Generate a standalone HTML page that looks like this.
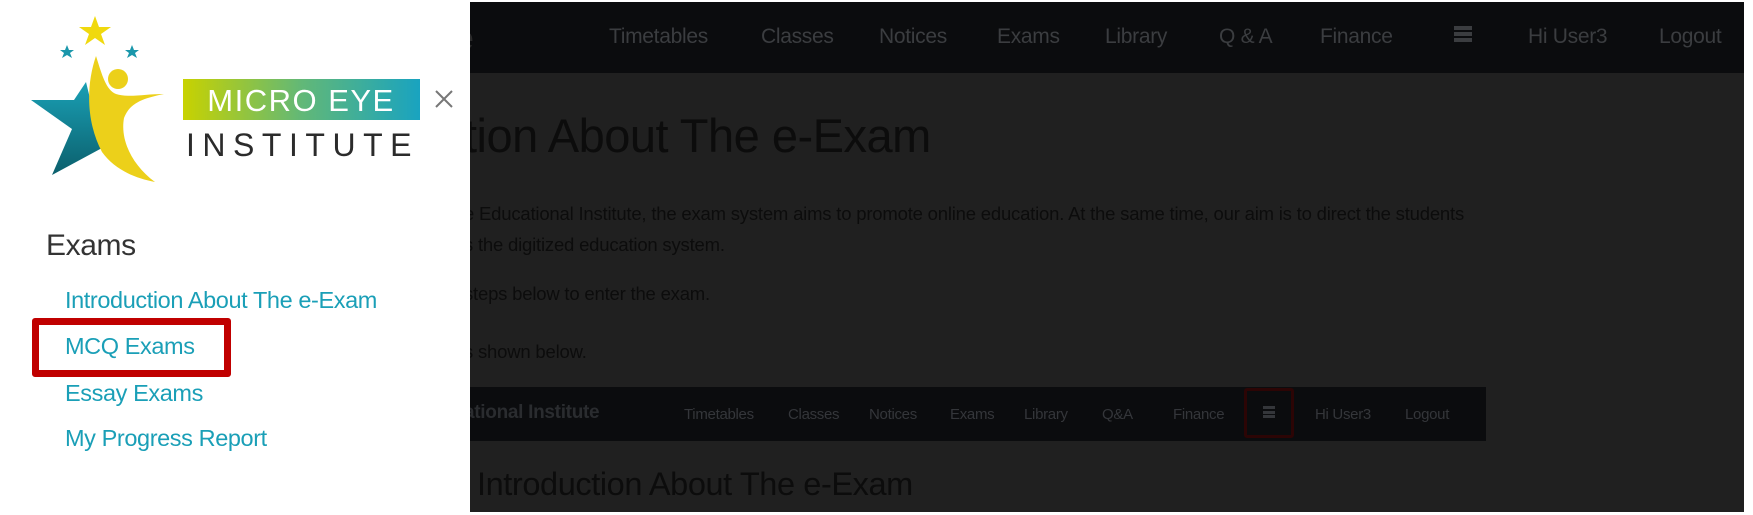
<!DOCTYPE html>
<html><head><meta charset="utf-8"><style>
*{margin:0;padding:0;box-sizing:border-box}
html,body{width:1753px;height:515px;overflow:hidden;background:#fff;font-family:"Liberation Sans",sans-serif}
.dark{position:absolute;left:470px;top:2px;width:1274px;height:510px;background:#202020;overflow:hidden}
.t{position:absolute;white-space:nowrap;line-height:1}
.nav{position:absolute;left:0;top:0;width:100%;height:71px;background:#0b0c0e}
.nav .t{top:24px;font-size:21px;color:#3b3d40;letter-spacing:-0.3px}
.inner{position:absolute;left:0;top:385px;width:1016px;height:54px;background:#0b0c0e}
.inner .t{top:20px;font-size:15px;color:#34363a;letter-spacing:-0.3px}
.p{font-size:18.5px;color:#0c0c0c;letter-spacing:-0.2px}
.panel{position:absolute;left:0;top:0;width:470px;height:515px;background:#fff}
.link{position:absolute;left:65px;font-size:23.5px;color:#1a9fb7;white-space:nowrap;line-height:1;letter-spacing:-0.4px}
</style></head><body>
<div class="dark">
 <div class="nav">
  <div class="t" style="left:-14px;font-size:32px;color:#2a2a2a;top:20px">e</div>
  <div class="t" style="left:139px">Timetables</div>
  <div class="t" style="left:291px">Classes</div>
  <div class="t" style="left:409px">Notices</div>
  <div class="t" style="left:527px">Exams</div>
  <div class="t" style="left:635px">Library</div>
  <div class="t" style="left:749px">Q &amp; A</div>
  <div class="t" style="left:850px">Finance</div>
  <div style="position:absolute;left:984px;top:24px;width:18px;height:16px;border-top:4px solid #3b3d40;border-bottom:4px solid #3b3d40"><div style="margin-top:2px;height:4px;background:#3b3d40"></div></div>
  <div class="t" style="left:1058px">Hi User3</div>
  <div class="t" style="left:1189px">Logout</div>
 </div>
 <div class="t" style="left:-6px;top:110px;font-size:47px;color:#0c0c0c;letter-spacing:-0.5px">tion About The e-Exam</div>
 <div class="t p" style="left:-6px;top:203px">e Educational Institute, the exam system aims to promote online education. At the same time, our aim is to direct the students</div>
 <div class="t p" style="left:-6px;top:234px">s the digitized education system.</div>
 <div class="t p" style="left:-6px;top:283px">steps below to enter the exam.</div>
 <div class="t p" style="left:-6px;top:341px">s shown below.</div>
 <div class="inner">
  <div class="t" style="left:-6px;top:16px;font-size:19px;font-weight:bold;color:#2a2c2f">ational Institute</div>
  <div class="t" style="left:214px">Timetables</div>
  <div class="t" style="left:318px">Classes</div>
  <div class="t" style="left:399px">Notices</div>
  <div class="t" style="left:480px">Exams</div>
  <div class="t" style="left:554px">Library</div>
  <div class="t" style="left:632px">Q&amp;A</div>
  <div class="t" style="left:703px">Finance</div>
  <div style="position:absolute;left:774px;top:1px;width:50px;height:50px;border:3px solid #2c0505;border-radius:3px"></div>
  <div style="position:absolute;left:793px;top:19px;width:12px;height:12px;border-top:3px solid #34363a;border-bottom:3px solid #34363a"><div style="margin-top:1.5px;height:3px;background:#34363a"></div></div>
  <div class="t" style="left:845px">Hi User3</div>
  <div class="t" style="left:935px">Logout</div>
 </div>
 <div class="t" style="left:7px;top:466px;font-size:32.5px;color:#0c0c0c;letter-spacing:-0.4px">Introduction About The e-Exam</div>
</div>
<div class="panel">
 <svg style="position:absolute;left:0;top:0" width="470" height="200" viewBox="0 0 470 200">
  <defs>
   <linearGradient id="g" x1="0" x2="1"><stop offset="0" stop-color="#c8d200"/><stop offset="0.5" stop-color="#62b877"/><stop offset="1" stop-color="#19a3c0"/></linearGradient>
   <linearGradient id="s" x1="0" y1="0" x2="0" y2="1"><stop offset="0" stop-color="#1aa0b5"/><stop offset="1" stop-color="#0b5f6c"/></linearGradient>
  </defs>
  <polygon fill="#f0d90e" points="95,16 99,27 111,27 101,34 105,45 95,38 85,45 89,34 79,27 91,27"/>
  <polygon fill="#1a97ab" points="67,45 69,50 74,50 70,53 72,58 67,55 62,58 64,53 60,50 65,50"/>
  <polygon fill="#1a97ab" points="132,45 134,50 139,50 135,53 137,58 132,55 127,58 129,53 125,50 130,50"/>
  <path fill="url(#s)" d="M86,82 L74,100 L31,100 L72,129 L52,175 L102,148 Z"/>
  <path fill="#ecd01a" d="M96,56 C86,85 86,122 102,152 C115,170 135,178 155,182 C132,165 120,140 124,118 C130,102 145,98 164,94 C145,94 128,98 116,94 C106,90 102,75 96,56 Z"/>
  <circle cx="118" cy="79" r="10" fill="#ecd01a"/>
  <rect x="183" y="79" width="237" height="41" fill="url(#g)"/>
  <text x="301" y="111" text-anchor="middle" font-family="Liberation Sans" font-size="31" fill="#fff" letter-spacing="1.5">MICRO EYE</text>
  <text x="186" y="156" font-family="Liberation Sans" font-size="32" fill="#2b2b2b" letter-spacing="8.5" textLength="234">INSTITUTE</text>
  <path d="M436,91 L452,107 M452,91 L436,107" stroke="#777" stroke-width="2"/>
 </svg>
 <div class="t" style="left:46px;top:231px;font-size:30px;color:#333;letter-spacing:-0.4px">Exams</div>
 <div class="link" style="top:289px">Introduction About The e-Exam</div>
 <div style="position:absolute;left:32px;top:318px;width:199px;height:59px;border:7px solid #c00000;border-radius:3px"></div>
 <div class="link" style="top:335px">MCQ Exams</div>
 <div class="link" style="top:382px">Essay Exams</div>
 <div class="link" style="top:427px">My Progress Report</div>
</div>
</body></html>
